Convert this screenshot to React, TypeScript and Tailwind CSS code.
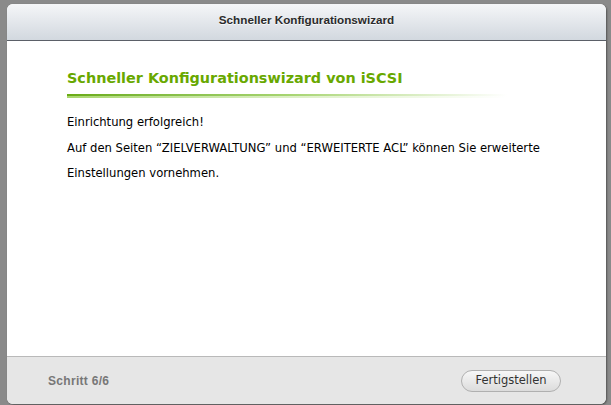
export default function App() {
  return (
    <div className="w-[611px] h-[405px] bg-[#8a8a8a] pl-[7px] pr-[5px] pt-[4px] pb-[1px] font-['DejaVu_Sans',sans-serif]">
      <div className="h-full flex flex-col rounded-[6px] overflow-hidden bg-white shadow-[1px_1px_2px_rgba(0,0,0,0.4)]">
        {/* Header */}
        <div className="h-[37px] shrink-0 flex items-center justify-center bg-gradient-to-b from-[#f5f6f8] to-[#d2d8df] border-b border-[#5b6068]">
          <span className="font-['Liberation_Sans',sans-serif] text-[11.7px] font-bold text-[#2b2b2b] [text-shadow:0_1px_0_rgba(255,255,255,0.8)] -mt-[4px]">
            Schneller Konfigurationswizard
          </span>
        </div>

        {/* Body */}
        <div className="flex-1 bg-white pl-[60px] pt-[27px]">
          <h1 className="text-[14.4px] font-bold text-[#68a800] leading-[20px]">
            Schneller Konfigurationswizard von iSCSI
          </h1>
          <div className="mt-[6px] w-[440px] flex flex-col">
            <div className="h-[2px] bg-gradient-to-r from-[#6aab12] via-[#a6d470] to-transparent" />
            <div className="h-[2px] bg-gradient-to-r from-[#a9d66d] via-[#dcefc5] to-transparent" />
          </div>
          <div className="mt-[11px] text-[11.6px] text-black leading-[26px]">
            <p>Einrichtung erfolgreich!</p>
            <p>Auf den Seiten “ZIELVERWALTUNG” und “ERWEITERTE ACL” können Sie erweiterte</p>
            <p className="-mt-[1px]">Einstellungen vornehmen.</p>
          </div>
        </div>

        {/* Footer */}
        <div className="h-[48px] shrink-0 flex items-center justify-between bg-[#e6e6e6] border-t border-[#b9b9b9] pl-[41px] pr-[45px]">
          <span className="font-['Liberation_Sans',sans-serif] text-[12px] font-bold text-[#777777] tracking-[0.3px]">Schritt 6/6</span>
          <button className="h-[22px] w-[100px] rounded-full border border-[#b0b0b0] bg-gradient-to-b from-[#f7f7f7] to-[#dcdcdc] text-[11.5px] text-[#333] leading-none">
            Fertigstellen
          </button>
        </div>
      </div>
    </div>
  );
}
